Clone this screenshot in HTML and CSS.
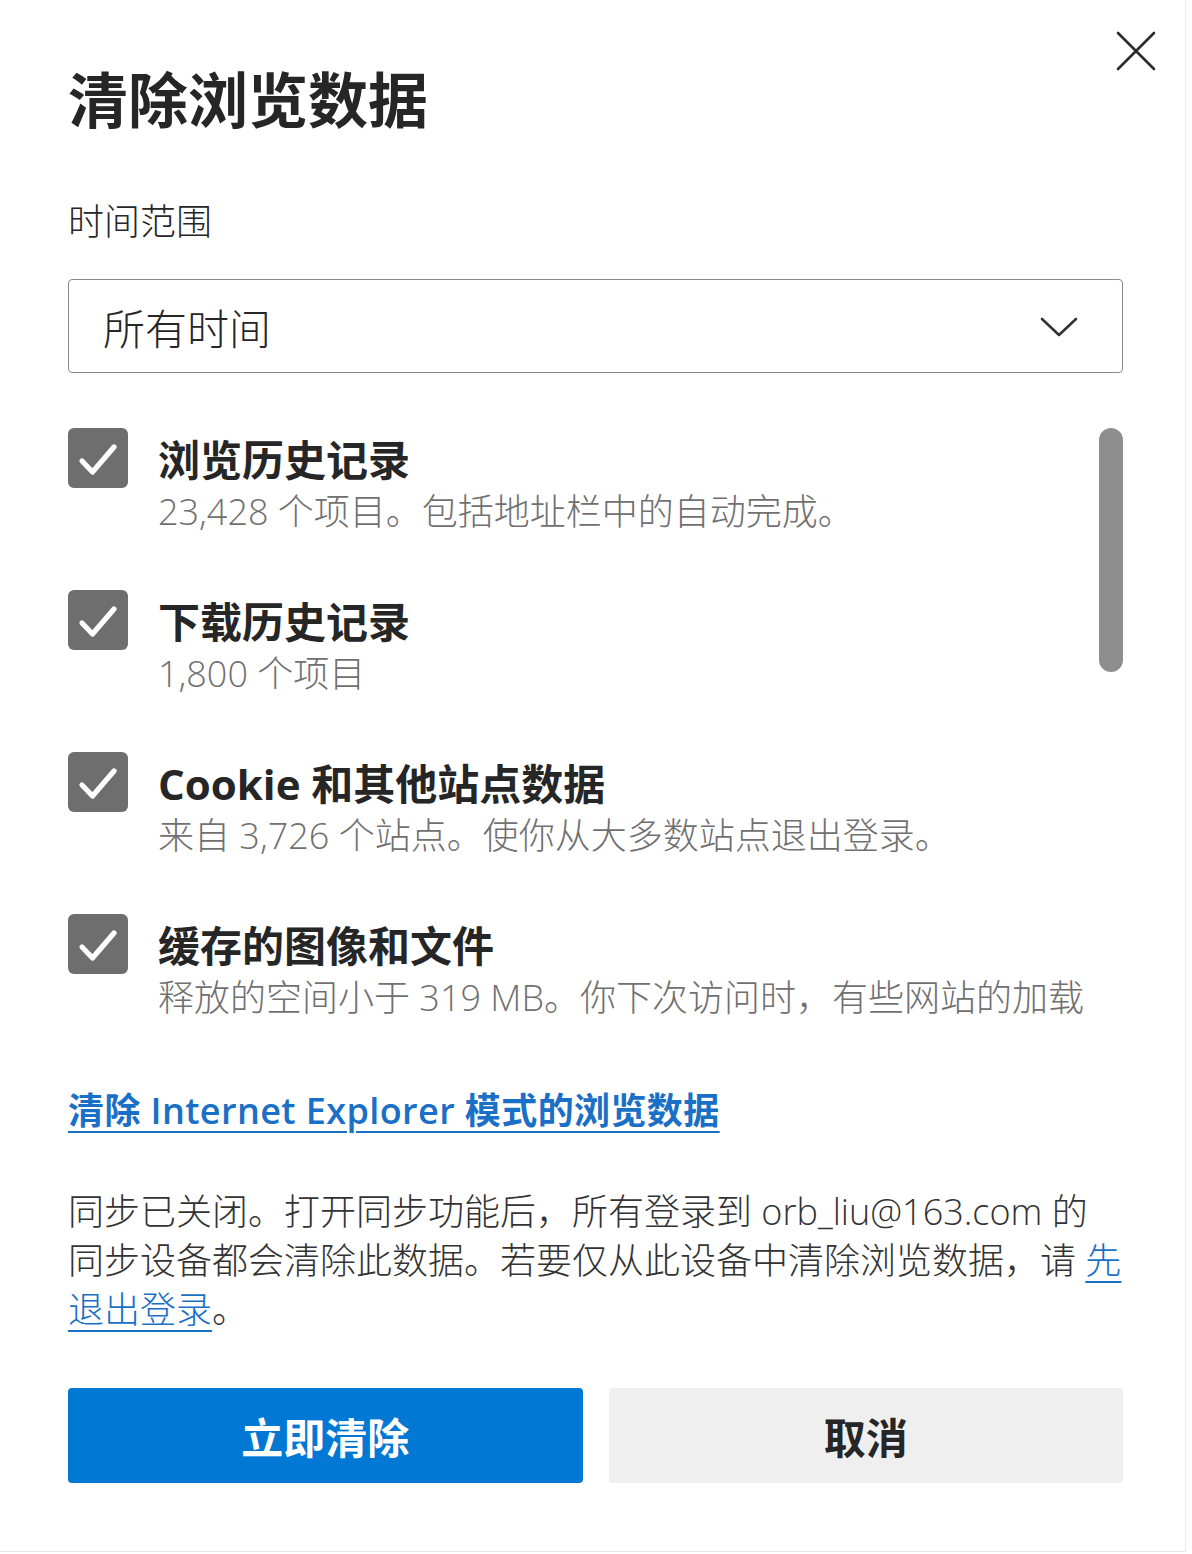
FILE: index.html
```html
<!DOCTYPE html>
<html lang="zh-CN">
<head>
<meta charset="utf-8">
<title>清除浏览数据</title>
<link rel="stylesheet" href="styles.css">
</head>
<body>
<div class="frame">
  <div class="dialog">
    <button class="close" aria-label="关闭">
      <svg width="40" height="40" viewBox="0 0 40 40"><path d="M2 2 L38 38 M38 2 L2 38" stroke="#2b2b2b" stroke-width="2.6" stroke-linecap="round" fill="none"/></svg>
    </button>
    <h1 class="title">清除浏览数据</h1>
    <div class="label">时间范围</div>
    <div class="select">
      <span class="select-value">所有时间</span>
      <svg class="chevron" width="38" height="22" viewBox="0 0 38 22"><path d="M2 3 L19 19 L36 3" stroke="#333" stroke-width="2.6" stroke-linecap="round" stroke-linejoin="round" fill="none"/></svg>
    </div>
    <div class="list">
      <div class="item">
        <span class="check"><svg width="60" height="60" viewBox="0 0 60 60"><path d="M14 33 L24.5 44 L46 19" stroke="#fff" stroke-width="5.2" stroke-linecap="round" stroke-linejoin="round" fill="none"/></svg></span>
        <div class="item-text">
          <div class="item-title">浏览历史记录</div>
          <div class="item-desc">23,428 个项目。包括地址栏中的自动完成。</div>
        </div>
      </div>
      <div class="item">
        <span class="check"><svg width="60" height="60" viewBox="0 0 60 60"><path d="M14 33 L24.5 44 L46 19" stroke="#fff" stroke-width="5.2" stroke-linecap="round" stroke-linejoin="round" fill="none"/></svg></span>
        <div class="item-text">
          <div class="item-title">下载历史记录</div>
          <div class="item-desc">1,800 个项目</div>
        </div>
      </div>
      <div class="item">
        <span class="check"><svg width="60" height="60" viewBox="0 0 60 60"><path d="M14 33 L24.5 44 L46 19" stroke="#fff" stroke-width="5.2" stroke-linecap="round" stroke-linejoin="round" fill="none"/></svg></span>
        <div class="item-text">
          <div class="item-title">Cookie 和其他站点数据</div>
          <div class="item-desc">来自 3,726 个站点。使你从大多数站点退出登录。</div>
        </div>
      </div>
      <div class="item last">
        <span class="check"><svg width="60" height="60" viewBox="0 0 60 60"><path d="M14 33 L24.5 44 L46 19" stroke="#fff" stroke-width="5.2" stroke-linecap="round" stroke-linejoin="round" fill="none"/></svg></span>
        <div class="item-text">
          <div class="item-title">缓存的图像和文件</div>
          <div class="item-desc">释放的空间小于 319 MB。你下次访问时，有些网站的加载</div>
        </div>
      </div>
      <div class="thumb"></div>
    </div>
    <a class="ie-link" href="#">清除 Internet Explorer 模式的浏览数据</a>
    <p class="sync">同步已关闭。打开同步功能后，所有登录到 orb_liu@163.com 的<br>同步设备都会清除此数据。若要仅从此设备中清除浏览数据，请 <a href="#">先<br>退出登录</a>。</p>
    <div class="actions">
      <button class="btn primary">立即清除</button>
      <button class="btn secondary">取消</button>
    </div>
  </div>
</div>
</body>
</html>
```

FILE: styles.css
```css
html, body {
  margin: 0;
  padding: 0;
  background: #ffffff;
}

body {
  font-family: "Open Sans", "Noto Sans CJK SC", sans-serif;
  color: #262626;
}

.frame {
  width: 1185px;
  height: 1551px;
  border-right: 1px solid #ececec;
  border-bottom: 1px solid #e6e6e6;
  overflow: hidden;
}

.dialog {
  position: relative;
  padding: 60px 0 0 68px;
  width: 1055px;
}

.close {
  position: absolute;
  top: 31px;
  left: 1116px;
  width: 40px;
  height: 40px;
  padding: 0;
  border: none;
  background: transparent;
}

.close svg {
  display: block;
}

.title {
  margin: 0;
  font-size: 60px;
  line-height: 80px;
  font-weight: 700;
  color: #262626;
  letter-spacing: 0;
}

.label {
  margin-top: 58px;
  font-size: 36px;
  line-height: 48px;
  font-weight: 300;
  color: #262626;
}

.select {
  margin-top: 33px;
  height: 94px;
  box-sizing: border-box;
  border: 1px solid #8a8a8a;
  border-radius: 4px;
  display: flex;
  align-items: center;
  justify-content: space-between;
  padding: 0 44px 0 34px;
}

.select-value {
  font-size: 42px;
  font-weight: 300;
  color: #262626;
}

.chevron {
  display: block;
  margin-top: 2px;
}

.list {
  position: relative;
  margin-top: 55px;
  height: 604px;
}

.item {
  display: flex;
  gap: 30px;
  margin-bottom: 58px;
}

.item.last {
  margin-bottom: 0;
}

.check {
  flex: none;
  width: 60px;
  height: 60px;
  border-radius: 6px;
  background: #6e6e6e;
}

.check svg {
  display: block;
}

.item-text {
  width: 945px;
}

.item-title {
  font-size: 42px;
  line-height: 64px;
  font-weight: 700;
  color: #262626;
}

.item-desc {
  font-size: 36px;
  line-height: 40px;
  font-weight: 300;
  color: #707070;
  white-space: nowrap;
}

.thumb {
  position: absolute;
  top: 0;
  right: 0;
  width: 24px;
  height: 244px;
  border-radius: 12px;
  background: #8e8e8e;
}

.ie-link {
  display: inline-block;
  margin-top: 55px;
  font-size: 36px;
  line-height: 48px;
  font-weight: 600;
  letter-spacing: 0.4px;
  color: #1a6fc6;
  text-decoration: underline;
  text-decoration-thickness: 2px;
  text-underline-offset: 7px;
}

.sync {
  margin: 52px 0 0 0;
  font-size: 36px;
  line-height: 49px;
  font-weight: 300;
  color: #333333;
}

.sync a {
  color: #1a6fc6;
  text-decoration: underline;
  text-decoration-thickness: 2px;
  text-underline-offset: 7px;
}

.actions {
  margin-top: 54px;
  display: grid;
  grid-template-columns: 1fr 1fr;
  gap: 26px;
}

.btn {
  height: 95px;
  border: none;
  border-radius: 4px;
  font-family: "Open Sans", "Noto Sans CJK SC", sans-serif;
  font-size: 42px;
  font-weight: 700;
}

.primary {
  background: #0078d4;
  color: #ffffff;
}

.secondary {
  background: #efefef;
  color: #262626;
}
```
